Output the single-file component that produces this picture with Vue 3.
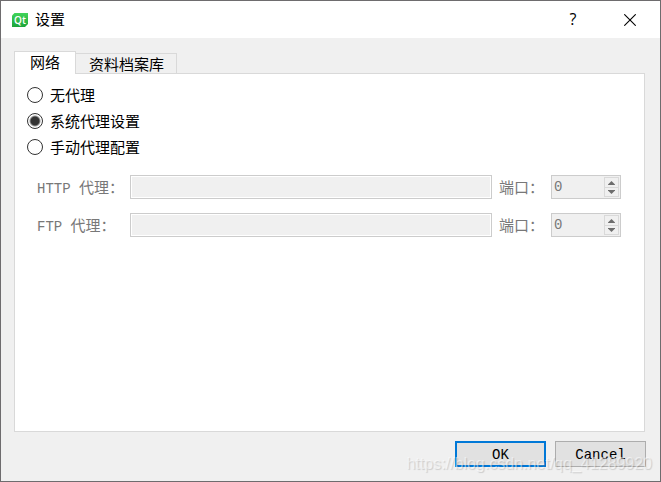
<script setup>
import { ref } from 'vue'

const tabs = ['网络', '资料档案库']
const activeTab = ref(0)

const modes = [
  { value: 'none', label: '无代理' },
  { value: 'system', label: '系统代理设置' },
  { value: 'manual', label: '手动代理配置' },
]
const mode = ref('system')

const proxies = ref([
  { id: 'http', name: 'HTTP', host: '', port: 0 },
  { id: 'ftp', name: 'FTP', host: '', port: 0 },
])
</script>

<template>
  <div class="dialog">
    <header class="titlebar">
      <svg class="logo" width="16" height="14" viewBox="0 0 16 14" aria-hidden="true">
        <defs>
          <linearGradient id="qt" x1="0" y1="0" x2="0" y2="1">
            <stop offset="0" stop-color="#41d45a" />
            <stop offset="1" stop-color="#1ca43a" />
          </linearGradient>
        </defs>
        <path d="M2.5 0H16V11L13 14H0V2.5Z" fill="url(#qt)" />
        <text x="8" y="11" text-anchor="middle" class="logo-text">Qt</text>
      </svg>
      <h1 class="title">设置</h1>
      <button class="caption help" type="button">?</button>
      <button class="caption close" type="button" aria-label="关闭">
        <svg width="12" height="12" viewBox="0 0 12 12">
          <path d="M0.3 0.3L11.7 11.7M11.7 0.3L0.3 11.7" stroke="#000" stroke-width="1.1" fill="none" />
        </svg>
      </button>
    </header>

    <main class="body">
      <div class="tabs" role="tablist">
        <button
          v-for="(tab, i) in tabs"
          :key="tab"
          type="button"
          role="tab"
          class="tab"
          :class="{ active: i === activeTab }"
          :aria-selected="i === activeTab"
          @click="activeTab = i"
        >{{ tab }}</button>
      </div>

      <section class="panel" role="tabpanel">
        <template v-if="activeTab === 0">
          <div class="modes">
            <label v-for="m in modes" :key="m.value" class="mode">
              <input v-model="mode" type="radio" name="mode" :value="m.value" />
              <span>{{ m.label }}</span>
            </label>
          </div>

          <div class="proxies">
            <div v-for="p in proxies" :key="p.id" class="proxy">
              <label class="host-label" :for="p.id + '-host'"><span class="latin">{{ p.name + ' ' }}</span>代理：</label>
              <input :id="p.id + '-host'" v-model="p.host" class="host" type="text" :disabled="mode !== 'manual'" />
              <label class="port-label" :for="p.id + '-port'">端口：</label>
              <div class="spin">
                <input :id="p.id + '-port'" v-model.number="p.port" class="port" type="text" :disabled="mode !== 'manual'" />
                <div class="steps">
                  <button type="button" aria-label="+" :disabled="mode !== 'manual'" @click="p.port++">
                    <svg width="7" height="4" viewBox="0 0 7 4"><path d="M0 4V3.4L3.5 0L7 3.4V4Z" fill="#6d6d6d" /></svg>
                  </button>
                  <button type="button" aria-label="-" :disabled="mode !== 'manual'" @click="p.port = Math.max(0, p.port - 1)">
                    <svg width="7" height="4" viewBox="0 0 7 4"><path d="M0 0V0.6L3.5 4L7 0.6V0Z" fill="#6d6d6d" /></svg>
                  </button>
                </div>
              </div>
            </div>
          </div>
        </template>
      </section>

      <footer class="actions">
        <button class="action primary" type="button">OK</button>
        <button class="action" type="button">Cancel</button>
      </footer>
    </main>

    <div class="watermark">https://blog.csdn.net/qq_41289920</div>
  </div>
</template>

<style>
body {
  margin: 0;
}
</style>

<style scoped>
.dialog,
.dialog * {
  box-sizing: border-box;
}
.dialog {
  position: relative;
  display: flex;
  flex-direction: column;
  min-height: 100vh;
  border: 1px solid #6e6c6e;
  background: #f0f0f0;
  color: #000;
  font-family: "Noto Sans CJK SC", sans-serif;
  font-size: 15px;
  font-weight: 400;
  line-height: 20px;
}
button,
input {
  margin: 0;
  padding: 0;
  border: 0;
  border-radius: 0;
  background: none;
  color: inherit;
  font: inherit;
}
.titlebar {
  display: flex;
  align-items: center;
  height: 37px;
  padding-left: 11px;
  background: #fff;
}
.logo-text {
  fill: #fff;
  font: 600 10px "Open Sans", sans-serif;
}
.title {
  flex: 1;
  margin: 0 0 2px 7px;
  font-size: 15px;
  font-weight: 400;
}
.caption {
  display: flex;
  align-items: center;
  justify-content: center;
  height: 37px;
}
.help {
  width: 54px;
  padding-bottom: 2px;
  font: 16px "Open Sans", sans-serif;
}
.close {
  width: 60px;
}
.body {
  flex: 1;
  display: flex;
  flex-direction: column;
  padding: 13px 15px 14px 13px;
}
.tabs {
  display: flex;
  align-items: flex-end;
}
.tab {
  height: 20px;
  padding: 0 12px 2px 13px;
  border: 1px solid #d9d9d9;
  border-left: 0;
  border-bottom: 0;
}
.tab.active {
  z-index: 1;
  height: 23px;
  margin-bottom: -1px;
  padding: 0 15px 2px;
  border-left: 1px solid #d9d9d9;
  background: #fff;
}
.panel {
  flex: 1;
  padding: 8px 23px 12px 12px;
  border: 1px solid #d9d9d9;
  background: #fff;
}
.mode {
  display: flex;
  align-items: center;
  gap: 7px;
  width: max-content;
  height: 26px;
}
.mode input {
  appearance: none;
  width: 16px;
  height: 16px;
  border: 1px solid #333;
  border-radius: 50%;
  background: #fff;
}
.mode input:checked {
  background: radial-gradient(circle, #333 4px, #fff 6px);
}
.proxies {
  display: grid;
  gap: 14px;
  margin-top: 15px;
  padding-left: 10px;
  color: #787878;
}
.proxy {
  display: flex;
  align-items: center;
  height: 24px;
}
.host-label {
  width: 93px;
  white-space: pre;
}
.latin,
.port,
.action {
  font-family: "Liberation Mono", monospace;
  font-size: 14px;
  font-weight: 400;
}
.latin {
  line-height: 16px;
}
.host {
  flex: 1;
  min-width: 0;
  height: 24px;
  padding: 0 3px;
  border: 1px solid #ccc;
  box-shadow: inset 0 0 0 1px #fff;
  background: #f0f0f0;
}
.port-label {
  width: 59px;
  padding-left: 7px;
}
.spin {
  display: flex;
  width: 70px;
  height: 24px;
  padding: 1px;
  border: 1px solid #ccc;
  background: #f0f0f0;
}
.port {
  flex: 1;
  min-width: 0;
  padding-left: 1px;
}
.steps {
  display: grid;
  grid-template-rows: 1fr 1fr;
  width: 15px;
  border: 1px solid #d9d9d9;
}
.steps button {
  display: flex;
  align-items: center;
  justify-content: center;
}
.steps button + button {
  border-top: 1px solid #d9d9d9;
}
.actions {
  display: flex;
  justify-content: flex-end;
  gap: 9px;
  margin: 9px -1px 0 0;
}
.action {
  width: 91px;
  height: 26px;
  padding: 2px 0 0;
  border: 1px solid #adadad;
  background: #e1e1e1;
}
.action.primary {
  border: 2px solid #0078d7;
}
.watermark {
  position: absolute;
  right: 8px;
  bottom: 7px;
  color: rgba(255, 255, 255, 0.5);
  font: 16px/20px "Liberation Sans", sans-serif;
  text-shadow: 1px 1px 1px rgba(0, 0, 0, 0.15);
  pointer-events: none;
}
</style>
